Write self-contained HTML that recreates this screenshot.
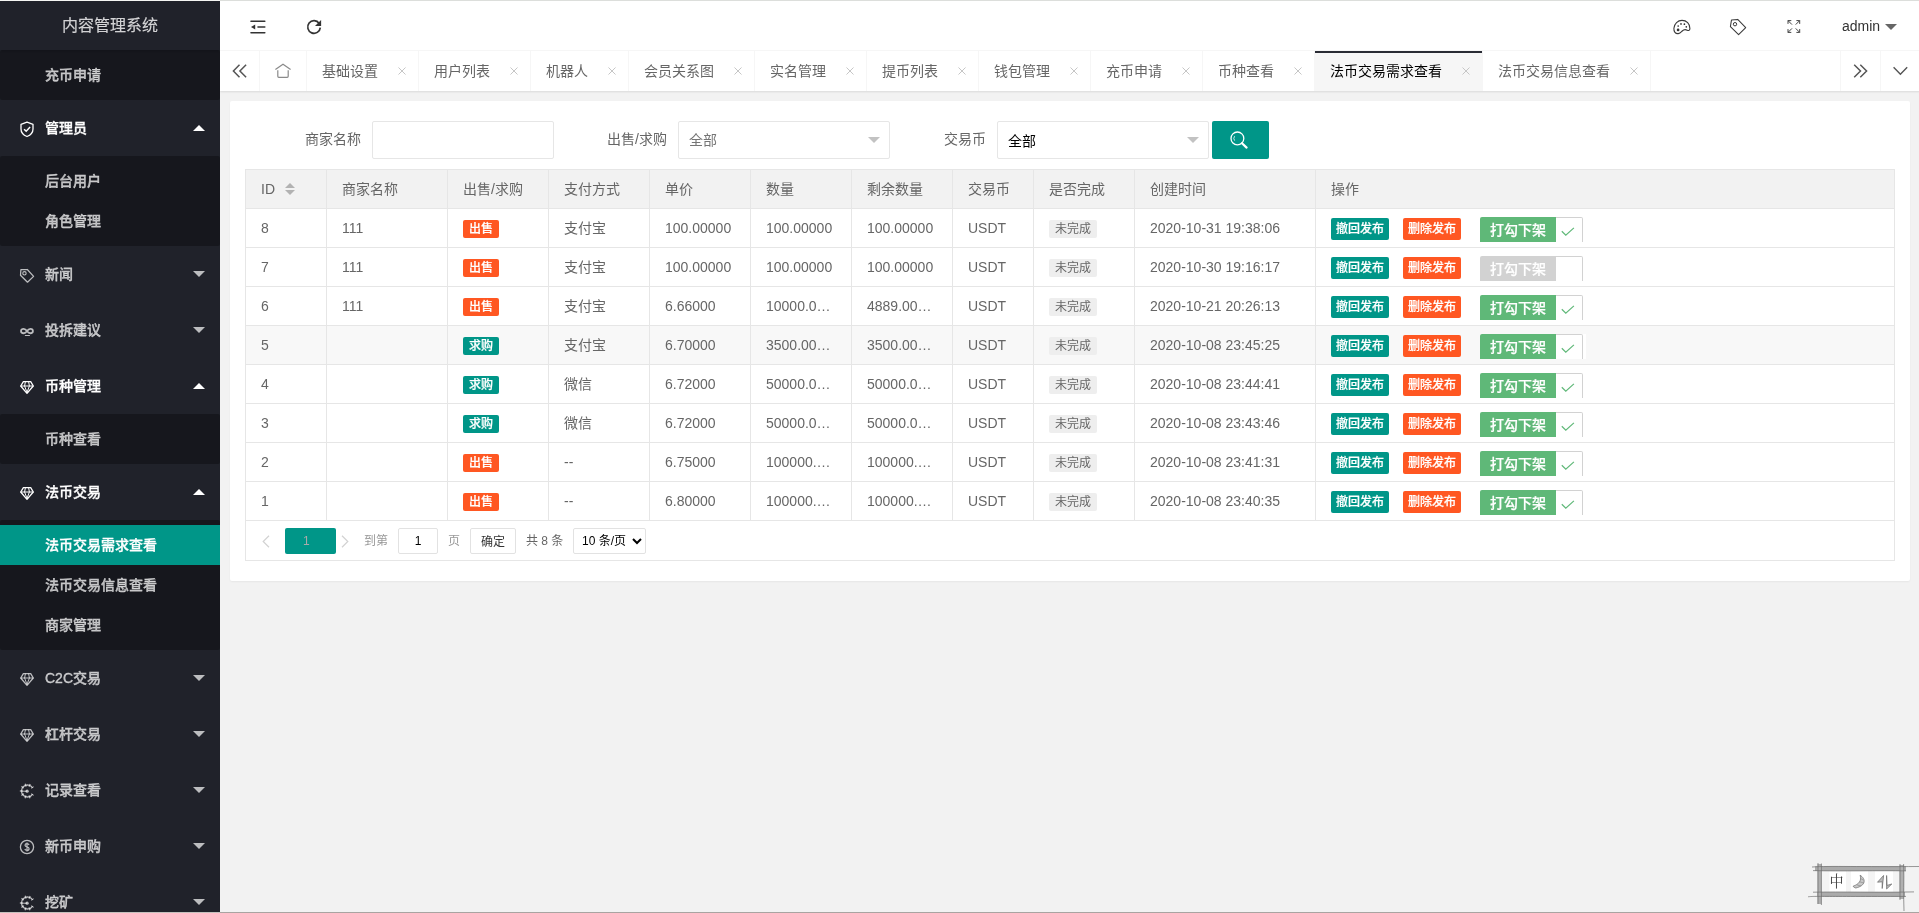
<!DOCTYPE html>
<html lang="zh-CN">
<head>
<meta charset="utf-8">
<title>内容管理系统</title>
<style>
*{box-sizing:border-box;margin:0;padding:0}
html,body{width:1919px;height:913px;overflow:hidden;background:#f2f2f2}
body{font-family:"Liberation Sans","Noto Sans CJK SC",sans-serif;font-size:14px;color:#666;line-height:24px;position:relative}
ul,li{list-style:none}
svg{display:block;overflow:visible}
#topline{position:absolute;left:0;top:0;width:1919px;height:1px;background:linear-gradient(90deg,#f5f6f3 0,#f5f6f3 220px,#dcdedb 220px);z-index:50}
#botline{position:absolute;left:0;top:912px;width:1919px;height:1px;background:linear-gradient(90deg,#c5c1bd 0,#c5c1bd 220px,#a9a4a1 220px);z-index:50}
#app{will-change:transform;position:absolute;left:0;top:1px;width:1920px;height:911px;overflow:hidden;background:#f2f2f2}
/* side */
#side{-webkit-text-stroke:0.3px;font-weight:500;position:absolute;left:0;top:0;width:220px;height:911px;background:#20222a;color:rgba(255,255,255,.7);overflow:hidden;z-index:10}
#logo{-webkit-text-stroke:0.1px;font-weight:400;position:absolute;left:0;top:0;width:220px;height:49px;line-height:49px;text-align:center;font-size:16px;color:rgba(255,255,255,.8);background:#20222a;box-shadow:0 1px 2px 0 rgba(0,0,0,.15);z-index:3}
#menu{position:absolute;left:0;top:49px;width:220px}
.mi{position:relative;height:56px;line-height:56px;padding-left:45px;white-space:nowrap}
.mi.on{color:#fff}
.mi .ic{position:absolute;left:19px;top:20.7px;width:16px;height:16px}
.mi .ar{position:absolute;left:193px;top:25px;width:0;height:0;border:6px solid transparent;border-top-color:rgba(255,255,255,.7)}
.mi.on .ar{top:19px;border-top-color:transparent;border-bottom-color:#fff}
.sub{background:rgba(0,0,0,.3);padding:5px 0;border-radius:2px}
.sub div{height:40px;line-height:40px;padding-left:45px}
.sub div.this{background:#009688;color:#fff}
/* header */
#header{position:absolute;left:220px;top:0;width:1700px;height:50px;background:#fff;border-bottom:1px solid #f6f6f6;z-index:5}
#header .hi{position:absolute;top:18px;width:16px;height:16px}
#admin{position:absolute;left:1622px;top:0;height:50px;line-height:50px;color:#333;font-size:14px}
#adminar{position:absolute;left:1665px;top:23px;width:0;height:0;border:6px solid transparent;border-top-color:#666}
/* tabs */
#tabs{position:absolute;left:220px;top:50px;width:1700px;height:40px;background:#fff;box-shadow:0 1px 2px 0 rgba(0,0,0,.1);z-index:4;line-height:40px;color:#666}
#tabs .ctl{position:absolute;top:0;width:40px;height:40px}
#tabs ul{position:absolute;left:40px;top:0;height:40px;white-space:nowrap;font-size:0}
#tabs li{display:inline-block;position:relative;height:40px;line-height:40px;font-size:14px;padding:0 40px 0 15px;border-right:1px solid #f6f6f6;vertical-align:top}
#tabs li.home{padding-right:15px}
#tabs li.this{background:#f6f6f6;color:#000}
#tabs li.this:after{content:"";position:absolute;left:0;top:0;width:100%;height:2px;background:#292b34}
#tabs li .x{position:absolute;right:12px;top:16px;width:8px;height:8px}
/* card */
#card{position:absolute;left:230px;top:100px;width:1680px;height:480px;background:#fff;border-radius:2px;box-shadow:0 1px 2px 0 rgba(0,0,0,.05)}

/* form */
.flabel{position:absolute;height:38px;line-height:36px;text-align:right;color:#666;font-size:14px}
.finput{position:absolute;height:38px;border:1px solid #e6e6e6;border-radius:2px;background:#fff;line-height:36px;padding-left:10px;font-size:14px}
.finput .ph{color:#757575}
.finput .val{color:#000;position:relative;top:1px}
.finput .edge{position:absolute;right:9px;top:15px;width:0;height:0;border:6px solid transparent;border-top-color:#c2c2c2}
.sbtn{position:absolute;width:57px;height:38px;background:#009688;border-radius:2px}
/* table */
#tview{position:absolute;width:1650px;border:1px solid #e6e6e6}
#tview table{border-collapse:separate;border-spacing:0;table-layout:fixed;width:1648px}
#tview th:last-child,#tview td:last-child{border-right:none}
#tview th,#tview td{border-right:1px solid #e6e6e6;border-bottom:1px solid #e6e6e6;height:39px;padding:0;text-align:left;font-weight:400;font-size:14px;color:#666}
#tview th{background:#f2f2f2}
#tview tr.hov td{background:#f8f8f8}
.cell{height:28px;line-height:28px;padding:0 15px;overflow:hidden;white-space:nowrap;position:relative}
.sort{display:inline-block;position:relative;width:10px;height:20px;margin-left:10px;vertical-align:middle;top:-1px}
.sort i{position:absolute;left:0;width:0;height:0;border:5px solid transparent}
.sort .up{top:-1px;border-bottom-color:#b2b2b2}
.sort .dn{top:11px;border-top-color:#b2b2b2}
.badge{display:inline-block;height:18px;line-height:18px;padding:0 6px;font-size:12px;color:#fff;background:#ff5722;border-radius:2px;text-align:center;vertical-align:middle;position:relative;top:0;font-weight:500;-webkit-text-stroke:0.2px}
.badge.green{background:#009688}
.badge.gray{background:#eee;color:#666;font-weight:400;-webkit-text-stroke:0}
.btn{-webkit-text-stroke:0.2px;font-weight:500;display:inline-block;height:22px;line-height:22px;padding:0 5px;font-size:12px;color:#fff;background:#009688;border-radius:2px;vertical-align:middle;margin-right:14px;position:relative;top:0}
.btn.danger{background:#ff5722;margin-right:19px}
.cbx{display:inline-block;position:relative;height:30px;width:106px;background:#fff;vertical-align:top;margin-top:3px}
.cbx>span{-webkit-text-stroke:0.2px;font-weight:500;position:absolute;left:0;top:0;width:76px;height:30px;line-height:26px;padding:0 10px;font-size:14px;color:#fff;background:#d2d2d2;border-radius:2px 0 0 2px;z-index:1}
.cbx.on>span{background:#5fb878}
.cbx>i{position:absolute;left:73px;top:0;width:30px;height:30px;border:1px solid #d2d2d2;border-left:none;border-radius:0 2px 2px 0;background:#fff}
.cbx>i svg{position:absolute;left:7.5px;top:8.5px}
#pbar{position:relative;height:39px;font-size:12px}
#pbar .pa{position:absolute}
#pbar .cur{position:absolute;width:51px;height:26px;line-height:26px;background:#009688;border-radius:2px;color:#aaa}
#pbar .cur em{position:absolute;left:18px;top:0;font-style:normal}
#pbar .pt{position:absolute;top:7px;height:26px;line-height:26px;white-space:nowrap}
#pbar .pin{position:absolute;top:7px;width:40px;height:26px;line-height:24px;border:1px solid #e2e2e2;border-radius:2px;text-align:center;color:#000;background:#fff}
#pbar .pbtn{position:absolute;top:7px;width:46px;height:26px;line-height:26px;border:1px solid #e2e2e2;border-radius:2px;text-align:center;color:#333;background:#fff}
#pbar .psel{position:absolute;top:7px;width:73px;height:26px;line-height:24px;border:1px solid #e2e2e2;border-radius:2px;padding-left:8px;color:#000;background:#fff;white-space:nowrap}
#pbar .psel svg{position:absolute;left:58px;top:9px}
/* ime */
#ime{position:absolute;left:1800px;top:855px;width:119px;height:58px;z-index:60;will-change:transform}
#ime svg{position:absolute;left:0;top:0}
#ime .c1{position:absolute;left:29.5px;top:16.5px;width:14px;height:20px;line-height:20px;font-size:14px;color:#3c3c3c;font-family:"Liberation Serif","Noto Serif CJK SC",serif;text-align:center;transform:scaleY(1.12);transform-origin:50% 20%}
</style>
</head>
<body>
<div id="topline"></div>
<div id="app">
<div id="side">
<div id="logo">内容管理系统</div>
<div id="menu"><div class="sub"><div>充币申请</div></div><div class="mi on"><svg class="ic" width="16" height="16" viewBox="0 0 16 16" ><path d="M8 1.1 L14 3.3 V8 C14 11.6 11.3 14.2 8 15.5 C4.7 14.2 2 11.6 2 8 V3.3 Z" fill="none" stroke="currentColor" stroke-width="1.3" stroke-linejoin="round"/><path d="M5.1 8.2 L7.2 10.2 L11.1 6.1" fill="none" stroke="currentColor" stroke-width="1.5"/></svg>管理员<i class="ar"></i></div><div class="sub"><div>后台用户</div><div>角色管理</div></div><div class="mi"><svg class="ic" width="16" height="16" viewBox="0 0 16 16" ><path d="M1.9 2.7 L8.3 2.5 L14.6 9.4 L8.5 15.2 L1.5 8.2 Z" fill="none" stroke="currentColor" stroke-width="1.25" stroke-linejoin="round"/><circle cx="5.45" cy="6.3" r="1.7" fill="none" stroke="currentColor" stroke-width="1.1"/></svg>新闻<i class="ar"></i></div><div class="mi"><svg class="ic" width="16" height="16" viewBox="0 0 16 16" ><path d="M8 8 C6.9 6.4 5.9 5.8 4.6 5.8 C3 5.8 2 6.7 2 8 C2 9.3 3 10.25 4.6 10.25 C5.9 10.25 6.9 9.6 8 8 C9.1 6.4 10.1 5.8 11.4 5.8 C13 5.8 13.9 6.7 13.9 8 C13.9 9.3 13 10.25 11.4 10.25 C10.1 10.25 9.1 9.6 8 8 Z" fill="none" stroke="currentColor" stroke-width="1.8"/><path d="M5.9 12.5 H10.9" stroke="currentColor" stroke-width="1"/></svg>投拆建议<i class="ar"></i></div><div class="mi on"><svg class="ic" width="16" height="16" viewBox="0 0 16 16" ><path d="M4.4 2.7 H11.7 L14.3 7 L8 14.3 L1.7 7 Z" fill="none" stroke="currentColor" stroke-width="1.3" stroke-linejoin="round"/><path d="M1.7 7 H14.3 M5.6 7 L8 13.4 L10.4 7 M6.4 2.7 L5.6 7 M9.6 2.7 L10.4 7" fill="none" stroke="currentColor" stroke-width="1"/></svg>币种管理<i class="ar"></i></div><div class="sub"><div>币种查看</div></div><div class="mi on"><svg class="ic" width="16" height="16" viewBox="0 0 16 16" ><path d="M4.4 2.7 H11.7 L14.3 7 L8 14.3 L1.7 7 Z" fill="none" stroke="currentColor" stroke-width="1.3" stroke-linejoin="round"/><path d="M1.7 7 H14.3 M5.6 7 L8 13.4 L10.4 7 M6.4 2.7 L5.6 7 M9.6 2.7 L10.4 7" fill="none" stroke="currentColor" stroke-width="1"/></svg>法币交易<i class="ar"></i></div><div class="sub"><div class="this">法币交易需求查看</div><div>法币交易信息查看</div><div>商家管理</div></div><div class="mi"><svg class="ic" width="16" height="16" viewBox="0 0 16 16" ><path d="M4.4 2.7 H11.7 L14.3 7 L8 14.3 L1.7 7 Z" fill="none" stroke="currentColor" stroke-width="1.3" stroke-linejoin="round"/><path d="M1.7 7 H14.3 M5.6 7 L8 13.4 L10.4 7 M6.4 2.7 L5.6 7 M9.6 2.7 L10.4 7" fill="none" stroke="currentColor" stroke-width="1"/></svg>C2C交易<i class="ar"></i></div><div class="mi"><svg class="ic" width="16" height="16" viewBox="0 0 16 16" ><path d="M4.4 2.7 H11.7 L14.3 7 L8 14.3 L1.7 7 Z" fill="none" stroke="currentColor" stroke-width="1.3" stroke-linejoin="round"/><path d="M1.7 7 H14.3 M5.6 7 L8 13.4 L10.4 7 M6.4 2.7 L5.6 7 M9.6 2.7 L10.4 7" fill="none" stroke="currentColor" stroke-width="1"/></svg>杠杆交易<i class="ar"></i></div><div class="mi"><svg class="ic" width="16" height="16" viewBox="0 0 16 16" ><path d="M13.6 4.9 A6 6 0 1 0 13.6 11.1" fill="none" stroke="currentColor" stroke-width="1.3"/><path d="M13.6 4.9 A6 6 0 1 0 13.6 11.1" fill="none" stroke="currentColor" stroke-width="3.2" stroke-dasharray="1.1 2.6" stroke-dashoffset="0.3" opacity=".9"/><circle cx="8.1" cy="8.2" r="1.6" fill="currentColor"/><path d="M3 8.2 H8" stroke="currentColor" stroke-width="1"/></svg>记录查看<i class="ar"></i></div><div class="mi"><svg class="ic" width="16" height="16" viewBox="0 0 16 16" ><circle cx="8" cy="8" r="6.6" fill="none" stroke="currentColor" stroke-width="1.3"/><path d="M10.1 5.9 C9.6 5 8.8 4.7 7.9 4.7 C6.8 4.7 6 5.3 6 6.3 C6 8.4 10.1 7.4 10.1 9.7 C10.1 10.8 9.2 11.4 8 11.4 C7 11.4 6.2 11 5.8 10.1 M8 3.6 V12.6" fill="none" stroke="currentColor" stroke-width="1.2"/></svg>新币申购<i class="ar"></i></div><div class="mi"><svg class="ic" width="16" height="16" viewBox="0 0 16 16" ><path d="M13.6 4.9 A6 6 0 1 0 13.6 11.1" fill="none" stroke="currentColor" stroke-width="1.3"/><path d="M13.6 4.9 A6 6 0 1 0 13.6 11.1" fill="none" stroke="currentColor" stroke-width="3.2" stroke-dasharray="1.1 2.6" stroke-dashoffset="0.3" opacity=".9"/><circle cx="8.1" cy="8.2" r="1.6" fill="currentColor"/><path d="M3 8.2 H8" stroke="currentColor" stroke-width="1"/></svg>挖矿<i class="ar"></i></div></div>
</div>
<div id="header"><svg class="hi" width="16" height="16" viewBox="0 0 16 16" style="left:30px"><path d="M1 2.2 H14.8 M8 8 H14.8 M1 13.8 H14.8" stroke="#333" stroke-width="1.6" stroke-linecap="round" fill="none"/><path d="M1 8 L5.2 5.4 V10.6 Z" fill="#333"/></svg><svg class="hi" width="16" height="16" viewBox="0 0 16 16" style="left:86px"><path d="M13.2 4.4 A6.3 6.3 0 1 0 14.3 8.6" fill="none" stroke="#333" stroke-width="1.7"/><path d="M15.1 1 V7 H9 Z" fill="#333"/></svg><svg class="hi" width="20" height="20" viewBox="0 0 20 20" style="left:1452px;top:16px;width:20px;height:20px"><path d="M6.3 16.6 C3.5 17 1.6 14.5 1.9 11.3 C2.3 6.5 5.8 3.4 10 3.4 C14.5 3.4 18 6.8 17.9 11.6 C17.9 13.5 16.5 13.9 15.2 13.2 C13.6 12.3 11.6 12.6 10.2 14 C9 15.2 8 16.4 6.3 16.6 Z" fill="none" stroke="#3a3a3a" stroke-width="1.1"/><circle cx="6.1" cy="12.9" r="1.35" fill="#333"/><circle cx="6.2" cy="9" r=".85" fill="#333"/><circle cx="9" cy="6.9" r=".85" fill="#333"/><circle cx="12.4" cy="7.2" r=".85" fill="#333"/><circle cx="14.3" cy="9.8" r=".85" fill="#333"/></svg><svg class="hi" width="20" height="20" viewBox="0 0 20 20" style="left:1508px;top:16px;width:20px;height:20px"><path d="M3.5 2.9 L9.7 2.4 L17.7 10.6 L10.6 17.7 L2.4 9.6 Z" fill="none" stroke="#3a3a3a" stroke-width="1.05" stroke-linejoin="round"/><circle cx="7" cy="7.2" r="1.7" fill="none" stroke="#3a3a3a" stroke-width="1"/></svg><svg class="hi" width="20" height="20" viewBox="0 0 20 20" style="left:1565px;top:16px;width:20px;height:20px"><g fill="none" stroke="#444" stroke-width="1"><path d="M6.3 3.6 H3 V6.9 M3 3.6 L7 7.6"/><path d="M11.4 3.6 H14.7 V6.9 M14.7 3.6 L10.7 7.6"/><path d="M6.3 15.4 H3 V12.1 M3 15.4 L7 11.4"/><path d="M11.4 15.4 H14.7 V12.1 M14.7 15.4 L10.7 11.4"/></g></svg><div id="admin">admin</div><i id="adminar"></i></div>
<div id="tabs"><div class="ctl" style="left:0;border-right:1px solid #f6f6f6"><svg width="40" height="40" viewBox="0 0 40 40"><path d="M19.5 13.7 L13.4 20 L19.5 26.3 M26.1 13.7 L19.9 20 L26.1 26.3" fill="none" stroke="#555" stroke-width="1.5"/></svg></div><ul><li class="home"><svg width="16" height="40" viewBox="0 0 16 40"><path d="M0.4 18.5 L8 13.3 L15.6 18.5 M2.8 19.3 V25.3 Q2.8 26.3 3.8 26.3 H12.2 Q13.2 26.3 13.2 25.3 V19.3" fill="none" stroke="#8a8a8a" stroke-width="1.2"/></svg></li><li>基础设置<svg class="x" width="8" height="8" viewBox="0 0 8 8"><path d="M0.5 0.5 L7.5 7.5 M7.5 0.5 L0.5 7.5" stroke="#c6c6c6" stroke-width="1" fill="none"/></svg></li><li>用户列表<svg class="x" width="8" height="8" viewBox="0 0 8 8"><path d="M0.5 0.5 L7.5 7.5 M7.5 0.5 L0.5 7.5" stroke="#c6c6c6" stroke-width="1" fill="none"/></svg></li><li>机器人<svg class="x" width="8" height="8" viewBox="0 0 8 8"><path d="M0.5 0.5 L7.5 7.5 M7.5 0.5 L0.5 7.5" stroke="#c6c6c6" stroke-width="1" fill="none"/></svg></li><li>会员关系图<svg class="x" width="8" height="8" viewBox="0 0 8 8"><path d="M0.5 0.5 L7.5 7.5 M7.5 0.5 L0.5 7.5" stroke="#c6c6c6" stroke-width="1" fill="none"/></svg></li><li>实名管理<svg class="x" width="8" height="8" viewBox="0 0 8 8"><path d="M0.5 0.5 L7.5 7.5 M7.5 0.5 L0.5 7.5" stroke="#c6c6c6" stroke-width="1" fill="none"/></svg></li><li>提币列表<svg class="x" width="8" height="8" viewBox="0 0 8 8"><path d="M0.5 0.5 L7.5 7.5 M7.5 0.5 L0.5 7.5" stroke="#c6c6c6" stroke-width="1" fill="none"/></svg></li><li>钱包管理<svg class="x" width="8" height="8" viewBox="0 0 8 8"><path d="M0.5 0.5 L7.5 7.5 M7.5 0.5 L0.5 7.5" stroke="#c6c6c6" stroke-width="1" fill="none"/></svg></li><li>充币申请<svg class="x" width="8" height="8" viewBox="0 0 8 8"><path d="M0.5 0.5 L7.5 7.5 M7.5 0.5 L0.5 7.5" stroke="#c6c6c6" stroke-width="1" fill="none"/></svg></li><li>币种查看<svg class="x" width="8" height="8" viewBox="0 0 8 8"><path d="M0.5 0.5 L7.5 7.5 M7.5 0.5 L0.5 7.5" stroke="#c6c6c6" stroke-width="1" fill="none"/></svg></li><li class="this">法币交易需求查看<svg class="x" width="8" height="8" viewBox="0 0 8 8"><path d="M0.5 0.5 L7.5 7.5 M7.5 0.5 L0.5 7.5" stroke="#c6c6c6" stroke-width="1" fill="none"/></svg></li><li>法币交易信息查看<svg class="x" width="8" height="8" viewBox="0 0 8 8"><path d="M0.5 0.5 L7.5 7.5 M7.5 0.5 L0.5 7.5" stroke="#c6c6c6" stroke-width="1" fill="none"/></svg></li></ul><div class="ctl" style="left:1620px;border-left:1px solid #f6f6f6;background:#fff"><svg style="margin-left:-1px" width="40" height="40" viewBox="0 0 40 40"><path d="M14.2 13.7 L20.5 20 L14.2 26.3 M20.3 13.7 L26.6 20 L20.3 26.3" fill="none" stroke="#555" stroke-width="1.5"/></svg></div><div class="ctl" style="left:1660px;border-left:1px solid #f6f6f6;background:#fff"><svg style="margin-left:-1px" width="40" height="40" viewBox="0 0 40 40"><path d="M13.6 16.3 L20.4 23.2 L27.2 16.3" fill="none" stroke="#555" stroke-width="1.4"/></svg></div></div>
<div id="card"><label class="flabel" style="left:31px;top:20px;width:100px">商家名称</label><div class="finput" style="left:142px;top:20px;width:182px"></div><label class="flabel" style="left:337px;top:20px;width:100px">出售/求购</label><div class="finput sel" style="left:448px;top:20px;width:212px"><span class="ph">全部</span><i class="edge"></i></div><label class="flabel" style="left:656px;top:20px;width:100px">交易币</label><div class="finput sel" style="left:767px;top:20px;width:212px"><span class="val">全部</span><i class="edge"></i></div><div class="sbtn" style="left:982px;top:20px"><svg width="57" height="38" viewBox="0 0 57 38"><circle cx="25.4" cy="17.4" r="6.4" fill="none" stroke="#fff" stroke-width="1.3"/><path d="M30 22.2 L34.6 26.6" stroke="#fff" stroke-width="2.2" stroke-linecap="round"/><path d="M22.6 15.2 A3.6 3.6 0 0 0 22.6 19.6" fill="none" stroke="#fff" stroke-width="0.8"/></svg></div><div id="tview" style="left:15px;top:68px"><table><colgroup><col style="width:81px"><col style="width:121px"><col style="width:101px"><col style="width:101px"><col style="width:101px"><col style="width:101px"><col style="width:101px"><col style="width:81px"><col style="width:101px"><col style="width:181px"><col style="width:578px"></colgroup><thead><tr><th><div class="cell">ID<span class="sort"><i class="up"></i><i class="dn"></i></span></div></th><th><div class="cell">商家名称</div></th><th><div class="cell">出售/求购</div></th><th><div class="cell">支付方式</div></th><th><div class="cell">单价</div></th><th><div class="cell">数量</div></th><th><div class="cell">剩余数量</div></th><th><div class="cell">交易币</div></th><th><div class="cell">是否完成</div></th><th><div class="cell">创建时间</div></th><th><div class="cell">操作</div></th></tr></thead><tbody><tr><td><div class="cell">8</div></td><td><div class="cell">111</div></td><td><div class="cell"><span class="badge">出售</span></div></td><td><div class="cell">支付宝</div></td><td><div class="cell">100.00000</div></td><td><div class="cell">100.00000</div></td><td><div class="cell">100.00000</div></td><td><div class="cell">USDT</div></td><td><div class="cell"><span class="badge gray">未完成</span></div></td><td><div class="cell">2020-10-31 19:38:06</div></td><td><div class="cell"><span class="btn">撤回发布</span><span class="btn danger">删除发布</span><span class="cbx on"><span>打勾下架</span><i><svg width="14" height="10" viewBox="0 0 14 10"><path d="M0.8 4.2 L4.8 8.1 L12.9 0.9" fill="none" stroke="#5fb878" stroke-width="1.2"/></svg></i></span></div></td></tr><tr><td><div class="cell">7</div></td><td><div class="cell">111</div></td><td><div class="cell"><span class="badge">出售</span></div></td><td><div class="cell">支付宝</div></td><td><div class="cell">100.00000</div></td><td><div class="cell">100.00000</div></td><td><div class="cell">100.00000</div></td><td><div class="cell">USDT</div></td><td><div class="cell"><span class="badge gray">未完成</span></div></td><td><div class="cell">2020-10-30 19:16:17</div></td><td><div class="cell"><span class="btn">撤回发布</span><span class="btn danger">删除发布</span><span class="cbx"><span>打勾下架</span><i></i></span></div></td></tr><tr><td><div class="cell">6</div></td><td><div class="cell">111</div></td><td><div class="cell"><span class="badge">出售</span></div></td><td><div class="cell">支付宝</div></td><td><div class="cell">6.66000</div></td><td><div class="cell">10000.0…</div></td><td><div class="cell">4889.00…</div></td><td><div class="cell">USDT</div></td><td><div class="cell"><span class="badge gray">未完成</span></div></td><td><div class="cell">2020-10-21 20:26:13</div></td><td><div class="cell"><span class="btn">撤回发布</span><span class="btn danger">删除发布</span><span class="cbx on"><span>打勾下架</span><i><svg width="14" height="10" viewBox="0 0 14 10"><path d="M0.8 4.2 L4.8 8.1 L12.9 0.9" fill="none" stroke="#5fb878" stroke-width="1.2"/></svg></i></span></div></td></tr><tr class="hov"><td><div class="cell">5</div></td><td><div class="cell"></div></td><td><div class="cell"><span class="badge green">求购</span></div></td><td><div class="cell">支付宝</div></td><td><div class="cell">6.70000</div></td><td><div class="cell">3500.00…</div></td><td><div class="cell">3500.00…</div></td><td><div class="cell">USDT</div></td><td><div class="cell"><span class="badge gray">未完成</span></div></td><td><div class="cell">2020-10-08 23:45:25</div></td><td><div class="cell"><span class="btn">撤回发布</span><span class="btn danger">删除发布</span><span class="cbx on"><span>打勾下架</span><i><svg width="14" height="10" viewBox="0 0 14 10"><path d="M0.8 4.2 L4.8 8.1 L12.9 0.9" fill="none" stroke="#5fb878" stroke-width="1.2"/></svg></i></span></div></td></tr><tr><td><div class="cell">4</div></td><td><div class="cell"></div></td><td><div class="cell"><span class="badge green">求购</span></div></td><td><div class="cell">微信</div></td><td><div class="cell">6.72000</div></td><td><div class="cell">50000.0…</div></td><td><div class="cell">50000.0…</div></td><td><div class="cell">USDT</div></td><td><div class="cell"><span class="badge gray">未完成</span></div></td><td><div class="cell">2020-10-08 23:44:41</div></td><td><div class="cell"><span class="btn">撤回发布</span><span class="btn danger">删除发布</span><span class="cbx on"><span>打勾下架</span><i><svg width="14" height="10" viewBox="0 0 14 10"><path d="M0.8 4.2 L4.8 8.1 L12.9 0.9" fill="none" stroke="#5fb878" stroke-width="1.2"/></svg></i></span></div></td></tr><tr><td><div class="cell">3</div></td><td><div class="cell"></div></td><td><div class="cell"><span class="badge green">求购</span></div></td><td><div class="cell">微信</div></td><td><div class="cell">6.72000</div></td><td><div class="cell">50000.0…</div></td><td><div class="cell">50000.0…</div></td><td><div class="cell">USDT</div></td><td><div class="cell"><span class="badge gray">未完成</span></div></td><td><div class="cell">2020-10-08 23:43:46</div></td><td><div class="cell"><span class="btn">撤回发布</span><span class="btn danger">删除发布</span><span class="cbx on"><span>打勾下架</span><i><svg width="14" height="10" viewBox="0 0 14 10"><path d="M0.8 4.2 L4.8 8.1 L12.9 0.9" fill="none" stroke="#5fb878" stroke-width="1.2"/></svg></i></span></div></td></tr><tr><td><div class="cell">2</div></td><td><div class="cell"></div></td><td><div class="cell"><span class="badge">出售</span></div></td><td><div class="cell">--</div></td><td><div class="cell">6.75000</div></td><td><div class="cell">100000.…</div></td><td><div class="cell">100000.…</div></td><td><div class="cell">USDT</div></td><td><div class="cell"><span class="badge gray">未完成</span></div></td><td><div class="cell">2020-10-08 23:41:31</div></td><td><div class="cell"><span class="btn">撤回发布</span><span class="btn danger">删除发布</span><span class="cbx on"><span>打勾下架</span><i><svg width="14" height="10" viewBox="0 0 14 10"><path d="M0.8 4.2 L4.8 8.1 L12.9 0.9" fill="none" stroke="#5fb878" stroke-width="1.2"/></svg></i></span></div></td></tr><tr><td><div class="cell">1</div></td><td><div class="cell"></div></td><td><div class="cell"><span class="badge">出售</span></div></td><td><div class="cell">--</div></td><td><div class="cell">6.80000</div></td><td><div class="cell">100000.…</div></td><td><div class="cell">100000.…</div></td><td><div class="cell">USDT</div></td><td><div class="cell"><span class="badge gray">未完成</span></div></td><td><div class="cell">2020-10-08 23:40:35</div></td><td><div class="cell"><span class="btn">撤回发布</span><span class="btn danger">删除发布</span><span class="cbx on"><span>打勾下架</span><i><svg width="14" height="10" viewBox="0 0 14 10"><path d="M0.8 4.2 L4.8 8.1 L12.9 0.9" fill="none" stroke="#5fb878" stroke-width="1.2"/></svg></i></span></div></td></tr></tbody></table><div id="pbar"><svg class="pa" style="left:16.3px;top:13.5px" width="8" height="13" viewBox="0 0 8 13"><path d="M7 0.8 L1.2 6.5 L7 12.2" fill="none" stroke="#d2d2d2" stroke-width="1.2"/></svg><span class="cur" style="left:39px;top:7px"><em>1</em></span><svg class="pa" style="left:94.5px;top:13.5px" width="8" height="13" viewBox="0 0 8 13"><path d="M1 0.8 L6.8 6.5 L1 12.2" fill="none" stroke="#d2d2d2" stroke-width="1.2"/></svg><span class="pt" style="left:118px;color:#999">到第</span><span class="pin" style="left:152px">1</span><span class="pt" style="left:202px;color:#999">页</span><span class="pbtn" style="left:224px">确定</span><span class="pt" style="left:280px;color:#666">共 8 条</span><span class="psel" style="left:327px">10 条/页<svg width="10" height="7" viewBox="0 0 10 7"><path d="M1 1 L5 5 L9 1" fill="none" stroke="#000" stroke-width="2"/></svg></span></div></div></div>
</div>
<div id="botline"></div>
<div id="ime"><svg width="119" height="58" viewBox="0 0 119 58">
<rect x="21" y="16" width="78" height="21" fill="#f4f4f4"/>
<rect x="29.5" y="16" width="16.5" height="21" fill="#fff"/><rect x="51" y="16" width="17" height="21" fill="#fff"/><rect x="75" y="16" width="18" height="21" fill="#fff"/>
<rect x="15" y="11.2" width="91" height="4.8" fill="#ababab"/>
<rect x="17" y="37" width="88" height="4.8" fill="#ababab"/>
<rect x="17.4" y="9" width="4" height="40" fill="#b0b0b0"/>
<rect x="99.5" y="10" width="4.5" height="34" fill="#b0b0b0"/>
<g fill="none" stroke="#6e6e6e" stroke-width=".7">
<path d="M12 12 C30 10.8 60 12 119 11.5 M13 15.6 C40 16.4 80 15.4 106 15.9"/>
<path d="M13 37.2 C40 36.6 80 37.6 114 36.9 M8 41.8 C14 41 20 41.6 106 41.4"/>
<path d="M18 8 V49 M21.4 8.5 V50"/>
<path d="M100 9 V45 M103.6 9 C104.4 25 103.2 40 104 56"/>
</g>
<g transform="translate(1.6,0)"><path d="M58.5 20.2 C64.5 24 64.5 30.5 54.2 33 C52.6 32.6 51.8 31.9 51.5 31.2 C57.5 29.2 60.2 25.5 58.5 20.2 Z" fill="#c9c9c9" stroke="#6a6a6a" stroke-width=".7"/>
<path d="M58.8 23.5 L61.8 25 M58 26.8 L62.2 28 M55.5 30 L59.5 31" stroke="#777" stroke-width=".5" fill="none"/></g>
<path d="M83.5 20.5 L77.5 27.2 L82.2 26.8 V33.5 L83.6 20.5 Z" fill="#bbb" stroke="#666" stroke-width=".7" stroke-linejoin="round"/>
<path d="M86.6 20.5 V34 L91.8 29 L87 30.4 Z" fill="#bbb" stroke="#666" stroke-width=".7" stroke-linejoin="round"/>
</svg><span class="c1">中</span></div></body>
</html>
